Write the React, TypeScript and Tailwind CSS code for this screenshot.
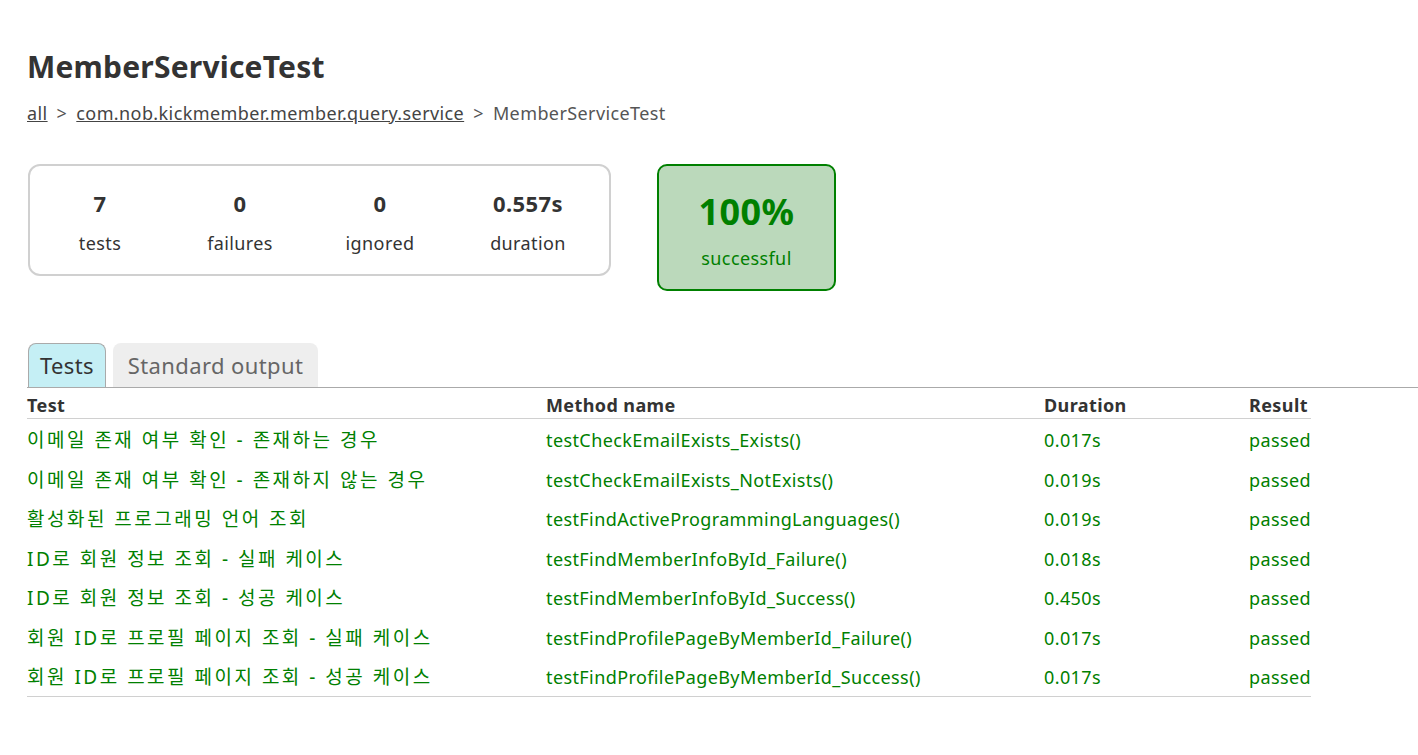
import React from 'react';

const rows = [
  { name: '이메일 존재 여부 확인 - 존재하는 경우', method: 'testCheckEmailExists_Exists()', duration: '0.017s' },
  { name: '이메일 존재 여부 확인 - 존재하지 않는 경우', method: 'testCheckEmailExists_NotExists()', duration: '0.019s' },
  { name: '활성화된 프로그래밍 언어 조회', method: 'testFindActiveProgrammingLanguages()', duration: '0.019s' },
  { name: 'ID로 회원 정보 조회 - 실패 케이스', method: 'testFindMemberInfoById_Failure()', duration: '0.018s' },
  { name: 'ID로 회원 정보 조회 - 성공 케이스', method: 'testFindMemberInfoById_Success()', duration: '0.450s' },
  { name: '회원 ID로 프로필 페이지 조회 - 실패 케이스', method: 'testFindProfilePageByMemberId_Failure()', duration: '0.017s' },
  { name: '회원 ID로 프로필 페이지 조회 - 성공 케이스', method: 'testFindProfilePageByMemberId_Success()', duration: '0.017s' },
];

const counters = [
  { value: '7', label: 'tests', w: 'w-[140px]' },
  { value: '0', label: 'failures', w: 'w-[140px]' },
  { value: '0', label: 'ignored', w: 'w-[140px]' },
  { value: '0.557s', label: 'duration', w: 'w-[156px]' },
];

const font = { fontFamily: '"Noto Sans", "Noto Sans CJK KR", sans-serif' };

export default function App() {
  return (
    <div className="min-h-[755px] bg-white pl-[27px] pt-[45px] text-[#333] tracking-[0.4px]" style={font}>
      <h1 className="text-[30px] font-bold leading-[44px] tracking-[0.2px]">MemberServiceTest</h1>
      <div className="mt-[11px] text-[18px] leading-[26px] text-[#555]">
        <a className="text-[#444] underline">all</a>
        <span className="mx-[9px]">&gt;</span>
        <a className="text-[#444] underline">com.nob.kickmember.member.query.service</a>
        <span className="mx-[9px]">&gt;</span>
        <span>MemberServiceTest</span>
      </div>

      <div className="mt-[38px] flex items-start">
        <div className="ml-px flex h-[112px] w-[583px] rounded-[12px] border-2 border-[#d0d0d0]">
          {counters.map((c) => (
            <div key={c.label} className={`${c.w} text-center`}>
              <div className="pt-[22px] text-[22px] font-bold leading-[30px]">{c.value}</div>
              <div className="mt-[12px] text-[18px] leading-[26px]">{c.label}</div>
            </div>
          ))}
        </div>
        <div className="ml-[46px] flex h-[127px] w-[179px] flex-col items-center rounded-[10px] border-2 border-[#008000] bg-[#bbd9bb] text-[#008000]">
          <div className="pt-[22px] text-[36px] font-bold leading-[48px]">100%</div>
          <div className="mt-[9px] text-[18px] leading-[26px]">successful</div>
        </div>
      </div>

      <div className="mt-[52px] flex items-end gap-[7px] border-b border-[#aaa]">
        <div className="ml-px flex h-[44px] w-[78px] items-center justify-center rounded-t-[8px] border border-b-0 border-[#aaa] bg-[#c5eff5] text-[22px] text-[#333]">
          Tests
        </div>
        <div className="flex h-[44px] w-[205px] items-center justify-center rounded-t-[8px] bg-[#eeeeee] text-[22px] text-[#666]">
          Standard output
        </div>
      </div>

      <table className="w-[1284px] table-fixed border-collapse text-[18px]">
        <colgroup>
          <col className="w-[519px]" />
          <col className="w-[498px]" />
          <col className="w-[205px]" />
          <col className="w-[62px]" />
        </colgroup>
        <thead>
          <tr className="border-b border-[#d0d0d0]">
            <th className="pb-[1px] pt-[6px] text-left font-bold leading-[23px] text-[#333]">Test</th>
            <th className="pb-[1px] pt-[6px] text-left font-bold leading-[23px] text-[#333]">Method name</th>
            <th className="pb-[1px] pt-[6px] text-left font-bold leading-[23px] text-[#333]">Duration</th>
            <th className="pb-[1px] pt-[6px] text-left font-bold leading-[23px] text-[#333]">Result</th>
          </tr>
        </thead>
        <tbody className="border-b border-[#d0d0d0] text-[#008000]">
          {rows.map((r) => (
            <tr key={r.method}>
              <td className="whitespace-nowrap pb-[5.5px] pt-[8px] text-[19px] leading-[26px] tracking-[2.5px]">{r.name}</td>
              <td className="whitespace-nowrap pb-[5.5px] pt-[8px] leading-[26px]">{r.method}</td>
              <td className="whitespace-nowrap pb-[5.5px] pt-[8px] leading-[26px]">{r.duration}</td>
              <td className="whitespace-nowrap pb-[5.5px] pt-[8px] leading-[26px]">passed</td>
            </tr>
          ))}
        </tbody>
      </table>
    </div>
  );
}
